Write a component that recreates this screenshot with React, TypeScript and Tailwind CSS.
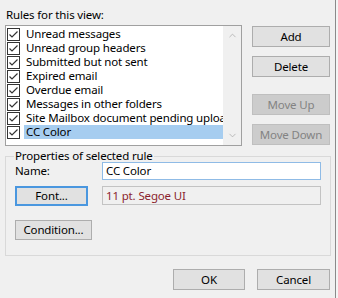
import { ChevronDown, ChevronUp } from 'lucide-react';

const rules = [
  'Unread messages',
  'Unread group headers',
  'Submitted but not sent',
  'Expired email',
  'Overdue email',
  'Messages in other folders',
  'Site Mailbox document pending upload',
  'CC Color',
];

function CheckBox() {
  return (
    <svg width="13" height="13" viewBox="0 0 13 13" className="shrink-0">
      <rect x="0.5" y="0.5" width="12" height="12" fill="#fff" stroke="#333" />
      <path d="M2.5 6.5 L5 9 L10.5 3.5" fill="none" stroke="#333" strokeWidth="1.2" />
    </svg>
  );
}

function Btn({ label, disabled, className }: { label: string; disabled?: boolean; className?: string }) {
  return (
    <button
      className={
        'h-[21px] border leading-none flex items-center justify-center ' +
        (disabled
          ? 'bg-[#cccccc] border-[#bfbfbf] text-[#838383] '
          : 'bg-[#e1e1e1] border-[#adadad] text-black ') +
        (className ?? '')
      }
    >
      {label}
    </button>
  );
}

export default function App() {
  return (
    <div className="w-[338px] h-[298px] bg-[#f0f0f0] flex font-['Noto_Sans',sans-serif] text-[11.5px] tracking-[-0.15px] text-black overflow-hidden">
      <div className="w-[335px] flex flex-col">
        <div className="pl-[6px] pt-[7px] h-[25px] leading-[16px]">Rules for this view:</div>

        {/* list + side buttons */}
        <div className="flex">
          <div className="ml-[5px] w-[237px] h-[121px] border border-[#a0a0a0] bg-white flex">
            <div className="w-[217px] pt-[1px] overflow-hidden">
              {rules.map((r, i) => (
                <div key={r} className="h-[14px] flex items-center pl-[1px]">
                  <CheckBox />
                  <span
                    className={
                      'ml-[4px] pl-[2px] h-[14px] leading-[14px] whitespace-nowrap flex-1 overflow-hidden ' +
                      (i === rules.length - 1 ? 'bg-[#a6cdf0]' : '')
                    }
                  >
                    {r}
                  </span>
                </div>
              ))}
            </div>
            <div className="w-[18px] bg-[#f0f0f0] flex flex-col items-center justify-between py-[4px] text-[#a3a3a3]">
              <ChevronUp size={11} strokeWidth={1.5} />
              <ChevronDown size={11} strokeWidth={1.5} />
            </div>
          </div>

          <div className="ml-[10px] w-[78px] pt-[1px] flex flex-col">
            <Btn label="Add" />
            <Btn label="Delete" className="mt-[9px]" />
            <Btn label="Move Up" disabled className="mt-[17px]" />
            <Btn label="Move Down" disabled className="mt-[9px]" />
          </div>
        </div>

        {/* properties group */}
        <div className="ml-[5px] mt-[10px] w-[326px] h-[100px] border border-[#d9d9d9] px-[9px] flex flex-col">
          <span className="-mt-[9px] -ml-[1px] px-[1px] bg-[#f0f0f0] w-fit leading-[16px]">
            Properties of selected rule
          </span>
          <div className="mt-[-2px] flex items-center h-[18px]">
            <span className="w-[87px]">Name:</span>
            <div className="flex-1 h-[18px] border border-[#8fbbe6] bg-white pl-[3px] leading-[16px]">CC Color</div>
          </div>
          <div className="mt-[6px] flex items-start">
            <button className="w-[73px] h-[20px] border-2 border-[#4a97df] bg-[#e1e1e1] leading-none flex items-center justify-center">
              Font...
            </button>
            <div className="ml-[14px] flex-1 h-[19px] border border-[#c3c3c3] bg-[#f0f0f0] pl-[3px] leading-[17px] text-[#8b1f2e]">
              11 pt. Segoe UI
            </div>
          </div>
          <button className="mt-[14px] w-[77px] h-[20px] border border-[#adadad] bg-[#e1e1e1] leading-none flex items-center justify-center">
            Condition...
          </button>
        </div>

        <div className="mt-[13px] flex justify-end gap-[12px] pr-[5px]">
          <Btn label="OK" className="w-[72px] h-[20px]" />
          <Btn label="Cancel" className="w-[73px] h-[20px]" />
        </div>
      </div>
      <div className="w-px h-full bg-[#8a8a8a]" />
      <div className="flex-1 bg-[#f4f4f4]" />
    </div>
  );
}
